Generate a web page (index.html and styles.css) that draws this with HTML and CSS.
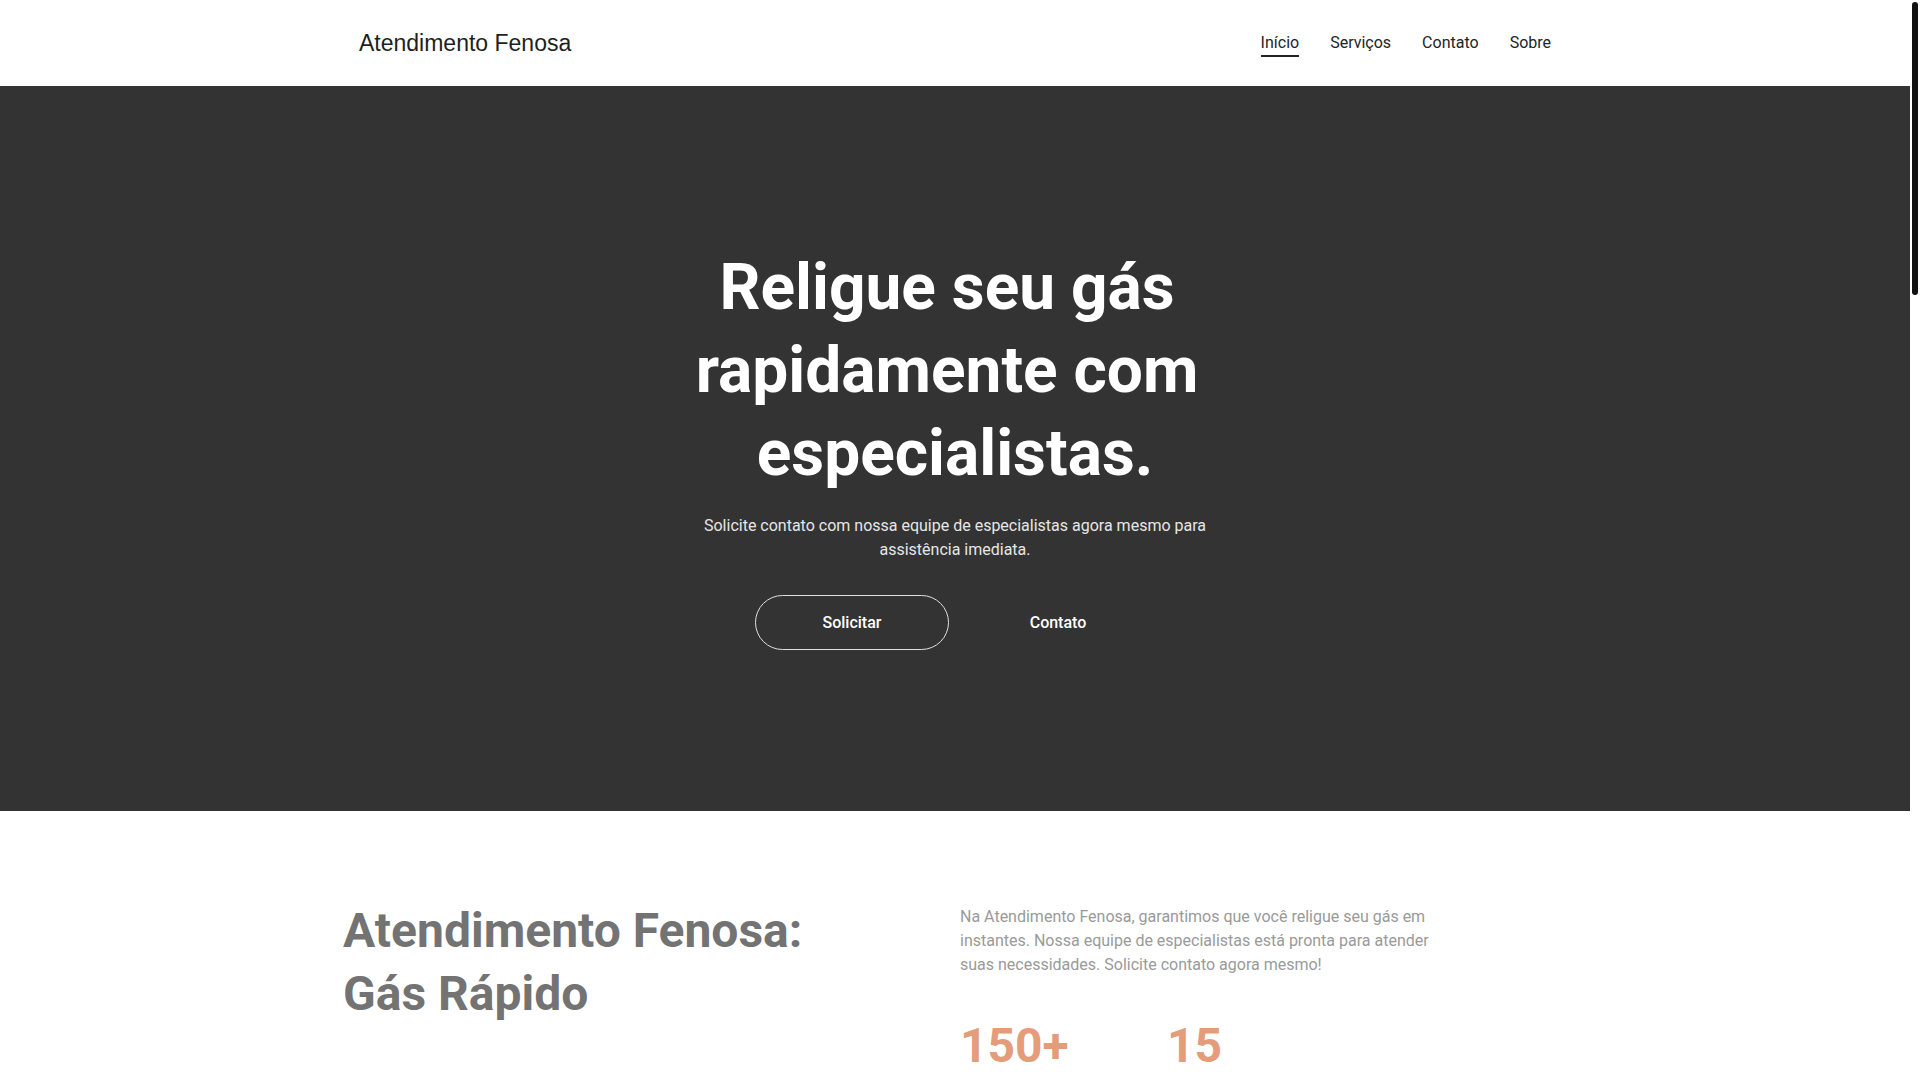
FILE: index.html
```html
<!DOCTYPE html>
<html lang="pt-BR">
<head>
<meta charset="utf-8">
<title>Atendimento Fenosa</title>
<link rel="stylesheet" href="styles.css">
</head>
<body>
<div class="page">
<header class="topbar">
  <div class="topbar-inner">
    <a class="brand" href="#">Atendimento Fenosa</a>
    <nav class="menu">
      <a class="menu-link active" href="#">Início</a>
      <a class="menu-link" href="#">Serviços</a>
      <a class="menu-link" href="#">Contato</a>
      <a class="menu-link" href="#">Sobre</a>
    </nav>
  </div>
</header>

<section class="hero">
  <div class="hero-inner">
    <h1 class="hero-title">Religue seu gás rapidamente com especialistas.</h1>
    <p class="hero-text">Solicite contato com nossa equipe de especialistas agora mesmo para assistência imediata.</p>
    <div class="hero-actions">
      <a class="btn btn-outline" href="#">Solicitar</a>
      <a class="btn btn-plain" href="#">Contato</a>
    </div>
  </div>
</section>

<section class="about">
  <div class="about-grid">
    <h2 class="about-title">Atendimento Fenosa: Gás Rápido</h2>
    <div class="about-body">
      <p class="about-text">Na Atendimento Fenosa, garantimos que você religue seu gás em instantes. Nossa equipe de especialistas está pronta para atender suas necessidades. Solicite contato agora mesmo!</p>
      <div class="stats">
        <div class="stat">
          <div class="stat-num">150+</div>
          <div class="stat-label">Clientes atendidos</div>
        </div>
        <div class="stat">
          <div class="stat-num">15</div>
          <div class="stat-label">Anos de experiência</div>
        </div>
      </div>
    </div>
  </div>
</section>

<section class="services">
  <div class="services-inner">
    <h2 class="section-title">Nossos Serviços</h2>
    <div class="cards">
      <div class="card"><h3>Religação de gás</h3><p>Restabelecemos o fornecimento de gás com rapidez e segurança.</p></div>
      <div class="card"><h3>Atendimento especializado</h3><p>Profissionais qualificados prontos para ajudar você.</p></div>
      <div class="card"><h3>Suporte imediato</h3><p>Entre em contato e receba assistência sem demora.</p></div>
    </div>
  </div>
</section>

<section class="contact">
  <div class="services-inner">
    <h2 class="section-title">Contato</h2>
    <p class="contact-text">Solicite contato com nossa equipe de especialistas agora mesmo.</p>
    <form class="contact-form">
      <input class="field" type="text" placeholder="Nome">
      <input class="field" type="text" placeholder="Telefone">
      <textarea class="field area" placeholder="Mensagem"></textarea>
      <button class="btn-send" type="button">Enviar</button>
    </form>
  </div>
</section>

<footer class="footer">
  <div class="services-inner">
    <p>© Atendimento Fenosa. Todos os direitos reservados.</p>
  </div>
</footer>
</div>
<div class="scroll-track" aria-hidden="true"><div class="scroll-thumb"></div></div>
</body>
</html>
```

FILE: styles.css
```css
html, body {
  margin: 0;
  padding: 0;
}
body {
  font-family: Roboto, "Noto Sans", Arial, sans-serif;
  color: #212529;
  background: #fff;
}
.page {
  margin-right: 10px;
}
.scroll-track {
  position: fixed;
  top: 0;
  right: 0;
  width: 10px;
  height: 100vh;
  background: #fff;
}
.scroll-thumb {
  margin: 2px 2px 0;
  width: 6px;
  height: 293px;
  border-radius: 3px;
  background: #111;
}
a {
  text-decoration: none;
}

.topbar {
  height: 86px;
  background: #fff;
}
.topbar-inner {
  max-width: 1192px;
  height: 100%;
  margin: 0 auto;
  display: flex;
  align-items: center;
  justify-content: space-between;
}
.brand {
  font-family: "Liberation Sans", Arial, sans-serif;
  font-size: 23px;
  color: #1d1f22;
  line-height: 1;
}
.menu {
  display: flex;
  gap: 31px;
  align-items: center;
}
.menu-link {
  font-size: 16px;
  line-height: 24px;
  color: #212529;
  border-bottom: 2px solid transparent;
  margin-top: 2px;
}
.menu-link.active {
  border-bottom-color: #212529;
}

.hero {
  height: 725px;
  box-sizing: border-box;
  padding-top: 160px;
  background: #333333;
  text-align: center;
}
.hero-inner {
  max-width: 526px;
  margin: 0 auto;
}
.hero-title {
  margin: 0 0 19px;
  font-size: 64px;
  line-height: 83px;
  font-weight: 700;
  color: #fff;
  white-space: break-spaces;
}
.hero-text {
  margin: 0 0 33px;
  font-size: 16px;
  line-height: 24px;
  color: #e6e6e6;
}
.hero-actions {
  display: flex;
  justify-content: center;
  gap: 12px;
}
.btn {
  width: 194px;
  height: 55px;
  box-sizing: border-box;
  display: flex;
  align-items: center;
  justify-content: center;
  border-radius: 28px;
  font-size: 16px;
  font-weight: 500;
  color: #fff;
}
.btn-outline {
  border: 1px solid #e0e0e0;
}
.btn-plain {
  border: 1px solid transparent;
}

.about {
  padding-top: 89px;
  padding-bottom: 120px;
}
.about-grid {
  width: 1224px;
  margin: 0 auto;
  display: grid;
  grid-template-columns: 617px 1fr;
}
.about-title {
  margin: -1px 0 0;
  max-width: 540px;
  font-size: 48px;
  line-height: 63px;
  font-weight: 700;
  color: #737373;
}
.about-text {
  margin: 5px 0 0;
  max-width: 480px;
  font-size: 16px;
  line-height: 24px;
  color: #9a9a9a;
}
.stats {
  margin-top: 39px;
  display: grid;
  grid-template-columns: repeat(3, 207px);
}
.stat-num {
  font-size: 48px;
  line-height: 60px;
  font-weight: 700;
  color: #e49c7b;
}
.stat-label {
  margin-top: 12px;
  font-size: 16px;
  line-height: 24px;
  color: #9a9a9a;
}

.services {
  padding: 120px 0;
  background: #f5f5f5;
}
.services-inner {
  width: 1224px;
  margin: 0 auto;
}
.section-title {
  margin: 0 0 40px;
  font-size: 44px;
  font-weight: 700;
  color: #333;
}
.cards {
  display: grid;
  grid-template-columns: repeat(3, 1fr);
  gap: 24px;
}
.card {
  background: #fff;
  padding: 40px;
  height: 420px;
  box-sizing: border-box;
}
.card h3 {
  margin: 0 0 16px;
  font-size: 24px;
  color: #333;
}
.card p {
  margin: 0;
  color: #777;
  line-height: 24px;
}

.contact {
  padding: 120px 0;
}
.contact-text {
  color: #777;
  margin: 0 0 32px;
}
.contact-form {
  display: flex;
  flex-direction: column;
  gap: 16px;
  max-width: 600px;
}
.field {
  font-family: inherit;
  font-size: 16px;
  padding: 14px 16px;
  border: 1px solid #ccc;
  border-radius: 4px;
}
.area {
  height: 240px;
}
.btn-send {
  align-self: flex-start;
  padding: 16px 48px;
  background: #333;
  color: #fff;
  border: 0;
  border-radius: 30px;
  font-family: inherit;
  font-size: 16px;
}

.footer {
  padding: 60px 0 420px;
  background: #333;
  color: #ccc;
}
.footer p {
  margin: 0;
}
```
